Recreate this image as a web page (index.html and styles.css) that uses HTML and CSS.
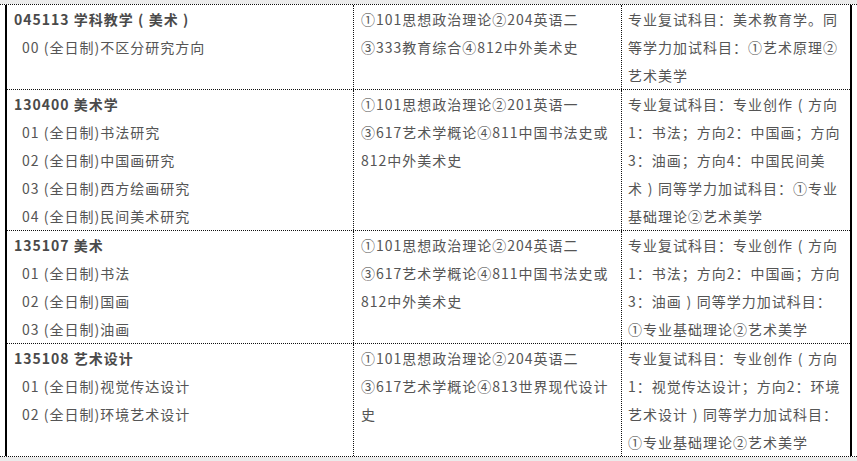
FILE: index.html
```html
<!DOCTYPE html>
<html lang="zh-CN">
<head>
<meta charset="utf-8">
<title>招生专业目录</title>
<link rel="stylesheet" href="styles.css">
</head>
<body>
<div class="sheet">
  <div class="frame">
    <div class="row">
      <div class="cell c1">
        <div class="major">045113 学科教学<span class="br">(</span>美术<span class="br">)</span></div>
        <div class="dir">00 (全日制)不区分研究方向</div>
      </div>
      <div class="cell c2">①101思想政治理论②204英语二<br>③333教育综合④812中外美术史</div>
      <div class="cell c3">专业复试科目<span class="p">：</span>美术教育学<span class="p">。</span>同<br>等学力加试科目<span class="p">：</span>①艺术原理②<br>艺术美学</div>
    </div>
    <div class="row">
      <div class="cell c1">
        <div class="major">130400 美术学</div>
        <div class="dir">01 (全日制)书法研究</div>
        <div class="dir">02 (全日制)中国画研究</div>
        <div class="dir">03 (全日制)西方绘画研究</div>
        <div class="dir">04 (全日制)民间美术研究</div>
      </div>
      <div class="cell c2">①101思想政治理论②201英语一<br>③617艺术学概论④811中国书法史或<br>812中外美术史</div>
      <div class="cell c3">专业复试科目<span class="p">：</span>专业创作<span class="br">(</span>方向<br>1<span class="p">：</span>书法<span class="p">；</span>方向2<span class="p">：</span>中国画<span class="p">；</span>方向<br>3<span class="p">：</span>油画<span class="p">；</span>方向4<span class="p">：</span>中国民间美<br>术<span class="br">)</span>同等学力加试科目<span class="p">：</span>①专业<br>基础理论②艺术美学</div>
    </div>
    <div class="row">
      <div class="cell c1">
        <div class="major">135107 美术</div>
        <div class="dir">01 (全日制)书法</div>
        <div class="dir">02 (全日制)国画</div>
        <div class="dir">03 (全日制)油画</div>
      </div>
      <div class="cell c2">①101思想政治理论②204英语二<br>③617艺术学概论④811中国书法史或<br>812中外美术史</div>
      <div class="cell c3">专业复试科目<span class="p">：</span>专业创作<span class="br">(</span>方向<br>1<span class="p">：</span>书法<span class="p">；</span>方向2<span class="p">：</span>中国画<span class="p">；</span>方向<br>3<span class="p">：</span>油画<span class="br">)</span>同等学力加试科目<span class="p">：</span><br>①专业基础理论②艺术美学</div>
    </div>
    <div class="row last">
      <div class="cell c1">
        <div class="major">135108 艺术设计</div>
        <div class="dir">01 (全日制)视觉传达设计</div>
        <div class="dir">02 (全日制)环境艺术设计</div>
      </div>
      <div class="cell c2">①101思想政治理论②204英语二<br>③617艺术学概论④813世界现代设计<br>史</div>
      <div class="cell c3">专业复试科目<span class="p">：</span>专业创作<span class="br">(</span>方向<br>1<span class="p">：</span>视觉传达设计<span class="p">；</span>方向2<span class="p">：</span>环境<br>艺术设计<span class="br">)</span>同等学力加试科目<span class="p">：</span><br>①专业基础理论②艺术美学</div>
    </div>
  </div>
</div>
</body>
</html>
```

FILE: styles.css
```css
html, body {
  margin: 0;
  padding: 0;
}

body {
  background: #ebebeb;
  font-family: "Noto Sans CJK SC", "Noto Sans", sans-serif;
  font-size: 14px;
  line-height: 28px;
  letter-spacing: 1px;
  color: #555;
}

.sheet {
  margin-top: 4px;
  background: #fff;
  padding: 0 5px;
  border-top: 1px dotted #111;
  border-bottom: 1px dotted #111;
}

.frame {
  border-left: 2px solid #000;
  border-right: 2px solid #000;
}

.row {
  display: grid;
  grid-template-columns: 347px 268px 1fr;
  border-bottom: 1px dotted #111;
}

.row.last {
  border-bottom: none;
}

.cell {
  white-space: nowrap;
}

.c1 {
  padding: 0 0 0 7px;
  border-right: 1px dotted #111;
}

.c2 {
  padding: 0 0 0 7px;
  border-right: 1px dotted #111;
}

.c3 {
  padding: 0 0 0 6px;
}

.p {
  font-family: "Noto Sans CJK TC", "Noto Sans CJK SC", sans-serif;
}

/* full-width bracket: glyph centred in a one-em cell */
.br {
  display: inline-block;
  width: 14px;
  text-align: center;
  letter-spacing: 0;
  margin-right: 1px;
}

.major {
  font-weight: bold;
  color: #4a4a4a;
}

.dir {
  padding-left: 8px;
}
```
